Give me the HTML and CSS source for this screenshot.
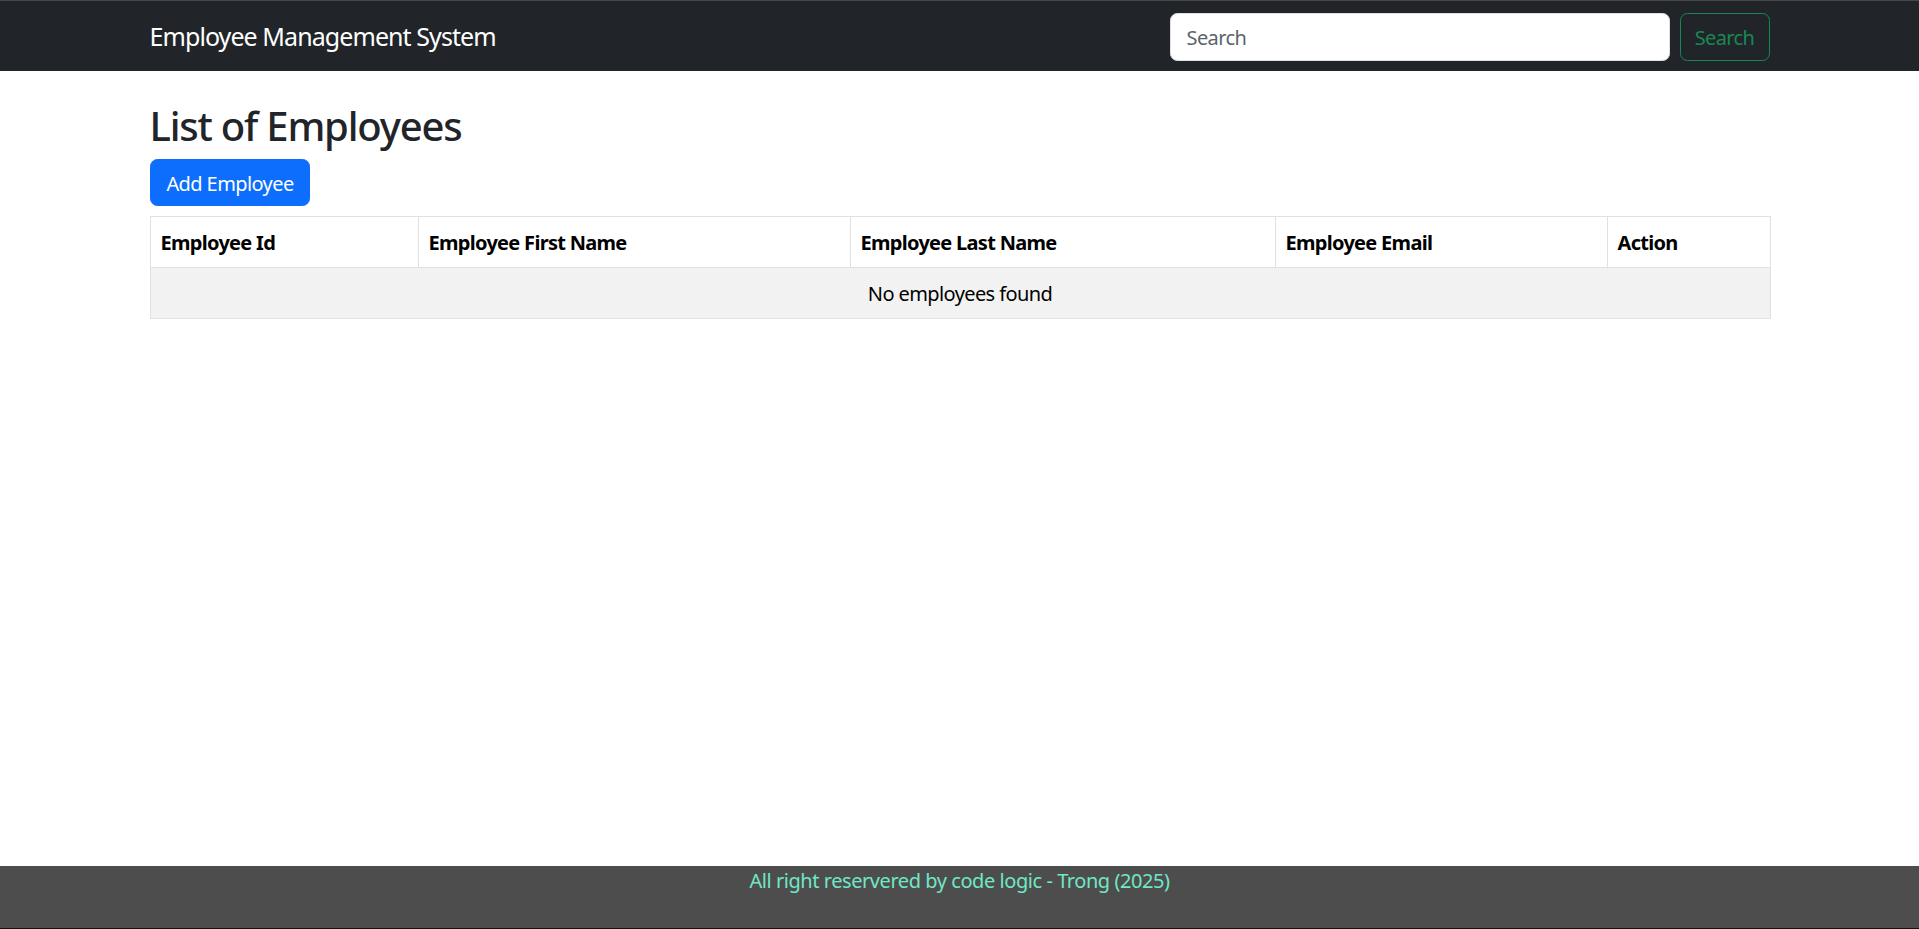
FILE: index.html
```html
<!DOCTYPE html>
<html lang="en">
<head>
<meta charset="utf-8">
<title>Employee Management System</title>
<link rel="stylesheet" href="styles.css">
</head>
<body>
<header class="navbar">
  <div class="container nav-inner">
    <a class="brand" href="#">Employee Management System</a>
    <form class="search-form">
      <input class="search-input" type="search" placeholder="Search">
      <button class="btn-search" type="button">Search</button>
    </form>
  </div>
</header>
<main class="container main">
  <h2 class="title">List of Employees</h2>
  <button class="btn-add" type="button">Add Employee</button>
  <table class="emp-table">
    <colgroup>
      <col class="c1"><col class="c2"><col class="c3"><col class="c4"><col class="c5">
    </colgroup>
    <thead>
      <tr>
        <th>Employee Id</th>
        <th>Employee First Name</th>
        <th>Employee Last Name</th>
        <th>Employee Email</th>
        <th>Action</th>
      </tr>
    </thead>
    <tbody>
      <tr class="empty-row"><td colspan="5">No employees found</td></tr>
    </tbody>
  </table>
</main>
<footer class="footer">All right reservered by code logic - Trong (2025)</footer>
</body>
</html>
```
FILE: styles.css
```css
* { box-sizing: border-box; }
html, body { margin: 0; padding: 0; }
body {
  font-family: "Noto Sans", "Open Sans", sans-serif;
  font-size: 20px;
  line-height: 1.5;
  letter-spacing: -0.03em;
  color: #212529;
  background: #fff;
  min-height: 100vh;
  display: flex;
  flex-direction: column;
}
.container {
  width: 100%;
  max-width: 1650px;
  margin: 0 auto;
  padding: 0 15px;
}
.navbar {
  background: #212529;
  border-top: 1px solid #474747;
  padding: 12px 0 10px;
}
.nav-inner {
  display: flex;
  align-items: center;
  justify-content: space-between;
}
.brand {
  color: #fff;
  font-size: 25px;
  line-height: 37.5px;
  letter-spacing: -0.037em;
  text-decoration: none;
}
.search-form { display: flex; align-items: center; }
.search-input {
  width: 500px;
  height: 47.5px;
  padding: 8.5px 16px 6.5px;
  font: inherit;
  font-size: 20px;
  letter-spacing: inherit;
  color: #212529;
  background: #fff;
  border: 1px solid #dee2e6;
  border-radius: 7.5px;
  outline: none;
}
.search-input::placeholder { color: #5c636a; }
.btn-search {
  margin-left: 10px;
  width: 90px;
  height: 47.5px;
  padding: 2px 0 0;
  font: inherit;
  font-size: 20px;
  letter-spacing: inherit;
  color: #198754;
  background: transparent;
  border: 1px solid #198754;
  border-radius: 7.5px;
}
.main { flex: 1; padding-top: 31px; }
.title {
  margin: 0 0 9px;
  font-size: 40px;
  font-weight: 500;
  line-height: 48px;
  letter-spacing: -0.03em;
}
.btn-add {
  display: block;
  width: 160px;
  height: 47.5px;
  padding: 3px 0 0 1px;
  font: inherit;
  font-size: 20px;
  letter-spacing: inherit;
  color: #fff;
  background: #0d6efd;
  border: 1px solid #0d6efd;
  border-radius: 7.5px;
}
.emp-table {
  width: 100%;
  margin-top: 10px;
  border-collapse: collapse;
  table-layout: fixed;
  color: #000;
}
.c1 { width: 268px; }
.c2 { width: 432px; }
.c3 { width: 425px; }
.c4 { width: 332px; }
.c5 { width: 163px; }
.emp-table th, .emp-table td {
  border: 1px solid #dee2e6;
  padding: 11px 10px 9px;
  line-height: 30px;
}
.emp-table th { text-align: left; font-weight: 700; letter-spacing: -0.035em; }
.empty-row td { background: #f2f2f2; text-align: center; }
.footer {
  height: 63px;
  background: #4d4d4d;
  border-bottom: 1px solid #111;
  color: #6fe8c6;
  text-align: center;
  font-size: 20px;
  line-height: 30px;
  letter-spacing: -0.022em;
}
```
